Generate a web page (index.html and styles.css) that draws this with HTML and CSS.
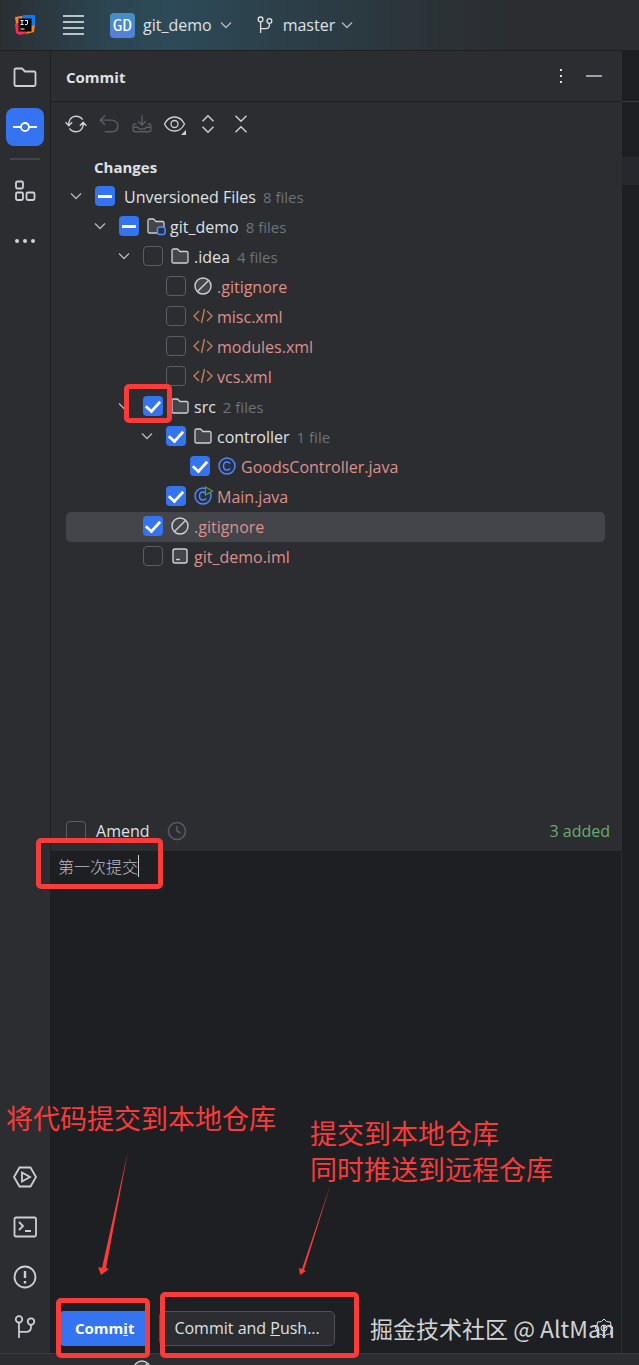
FILE: index.html
```html
<!DOCTYPE html>
<html lang="en">
<head>
  <meta charset="UTF-8">
  <meta name="viewport" content="width=device-width, initial-scale=1.0">
  <title>git_demo - Commit</title>
  <link rel="stylesheet" href="styles.css">
</head>
<body>

  <!-- Shared icons -->
  <svg class="sprite" aria-hidden="true">
    <symbol id="chevron" viewBox="0 0 12 12"><path d="M1 3.500l5 5 5-5" fill="none" stroke="currentColor" stroke-width="1.3"/></symbol>
    <symbol id="folder" viewBox="0 0 18 16"><path d="M1 2.500Q1 1 2.500 1H6.500L9 3.500H15.500Q17 3.500 17 5V13.500Q17 15 15.500 15H2.500Q1 15 1 13.500Z" fill="#43454a" stroke="#ced0d6" stroke-width="1.3"/></symbol>
    <symbol id="ignored" viewBox="0 0 18 18"><circle cx="9" cy="9" r="8" fill="#43454a" stroke="#ced0d6" stroke-width="1.4"/><path d="M3.500 14.500l11-11" stroke="#ced0d6" stroke-width="1.4"/></symbol>
    <symbol id="xml" viewBox="0 0 20 16"><path d="M6 3L1 8l5 5M14 3l5 5-5 5M11.500 1L8.500 15" fill="none" stroke="#c77d55" stroke-width="1.4"/></symbol>
    <symbol id="branch" viewBox="0 0 20 22"><g fill="none" stroke="currentColor" stroke-width="1.6"><circle cx="4.500" cy="4" r="3"/><circle cx="15.500" cy="6" r="3"/><path d="M4.500 7V21M4.500 15.500H11Q15.500 15.500 15.500 11V9"/></g></symbol>
  </svg>

  <!-- Top bar -->
  <header class="topbar">
    <svg class="logo" viewBox="0 0 20 20">
      <path d="M0 2L7 1 12 6 6 19 2 17Z" fill="#fc801d"/>
      <path d="M0 9L6 7 12 18 5 20 1 18Z" fill="#fe2857"/>
      <path d="M8 0H20V10L15 15 6 6Z" fill="#087cfa"/>
      <path d="M20 10L19 17 11 19 14 12Z" fill="#fc801d"/>
      <rect x="3.500" y="3.500" width="13" height="13" fill="#000"/>
      <path d="M5.500 5.500h3M7 5.500v4M5.500 9.500h3M10 5.500h2.500v3q0 1-1 1H10M5.500 14h4" stroke="#fff" fill="none"/>
    </svg>
    <button class="menu-button" aria-label="Main menu"><i></i><i></i><i></i><i></i></button>
    <button class="project"><span class="badge">GD</span>git_demo<svg class="chevron"><use href="#chevron"/></svg></button>
    <button class="vcs"><svg class="branch"><use href="#branch"/></svg>master<svg class="chevron"><use href="#chevron"/></svg></button>
  </header>

  <div class="workspace">

    <!-- Tool window bar -->
    <nav class="rail">
      <button aria-label="Project"><svg viewBox="0 0 24 24"><path d="M1.500 5Q1.500 3.500 3 3.500H9L12 6.500H21Q22.500 6.500 22.500 8V19.500Q22.500 21 21 21H3Q1.500 21 1.500 19.500Z"/></svg></button>
      <button class="active" aria-label="Commit"><svg viewBox="0 0 24 24"><circle cx="12" cy="12" r="4"/><path d="M0 12h8M16 12h8"/></svg></button>
      <hr>
      <button aria-label="Structure"><svg viewBox="0 0 24 24"><rect x="3" y="2.500" width="7" height="7" rx="1.500"/><rect x="3" y="13.500" width="7" height="7.500" rx="1.500"/><rect x="13.500" y="13.500" width="8" height="7.500" rx="1.500"/></svg></button>
      <button aria-label="More"><svg viewBox="0 0 24 24"><g class="solid"><circle cx="4" cy="12" r="2"/><circle cx="12" cy="12" r="2"/><circle cx="20" cy="12" r="2"/></g></svg></button>
      <span class="spacer"></span>
      <button aria-label="Services"><svg viewBox="0 0 24 24"><path d="M6.500 2.500h11L23 12l-5.500 9.500h-11L1 12ZM9 7.500v9l8-4.500Z"/></svg></button>
      <button aria-label="Terminal"><svg viewBox="0 0 24 24"><rect x="1.500" y="2.500" width="21.500" height="19" rx="1.500"/><path d="M6 7l4 4-4 4M12 16h6"/></svg></button>
      <button aria-label="Problems"><svg viewBox="0 0 24 24"><circle cx="12" cy="12" r="10.500"/><path class="thick" d="M12 6v7M12 16v2.500"/></svg></button>
      <button aria-label="Git"><svg viewBox="0 0 20 22"><use href="#branch"/></svg></button>
    </nav>

    <!-- Commit tool window -->
    <main class="commit">
      <div class="title">
        <h1>Commit</h1>
        <button aria-label="Options"><svg viewBox="0 0 16 16"><g class="solid"><rect x="7" y="1" width="2" height="2"/><rect x="7" y="7" width="2" height="2"/><rect x="7" y="13" width="2" height="2"/></g></svg></button>
        <button class="hide" aria-label="Hide"><svg viewBox="0 0 16 16"><path d="M0 8h16"/></svg></button>
      </div>

      <div class="toolbar">
        <button aria-label="Refresh"><svg viewBox="0 0 20 20"><path d="M3.500 11V8.500Q5 3 10 3q4 0 6 3M16.500 9v2.500Q15 17 10 17q-4 0-6-3M.5 8.500l3 3 3-3M13.500 11.500l3-3 3 3"/></svg></button>
        <button class="off" aria-label="Rollback"><svg viewBox="0 0 20 20"><path d="M6.500 2L2 6.500 6.500 11M2 6.500H12.500Q18 7 18 12t-5.500 5H6"/></svg></button>
        <button class="off" aria-label="Shelve"><svg viewBox="0 0 20 20"><path d="M10 2v9M6.500 7.500L10 11l3.500-3.500M5 10H3.500Q2 10 2 11.500V15.500Q2 17 3.500 17h13q1.500 0 1.500-1.500V11.500Q18 10 16.500 10H15M2 13H6l1.500 1.500h5L14 13h4"/></svg></button>
        <button aria-label="View options"><svg viewBox="1 1 22 22"><path d="M1.500 12Q5 5 11.500 5T21.500 12Q18 19 11.500 19T1.500 12Z"/><circle cx="11.500" cy="12" r="3.500"/><path class="solid" d="M23 18v5h-5Z"/></svg></button>
        <button aria-label="Expand all"><svg viewBox="0 0 20 20"><path d="M5 7.500l5-5 5 5M5 12.500l5 5 5-5"/></svg></button>
        <button aria-label="Collapse all"><svg viewBox="0 0 20 20"><path d="M5 2.500l5 5 5-5M5 17.500l5-5 5 5"/></svg></button>
      </div>

      <h2>Changes</h2>
      <ul class="tree">
        <li class="lvl0"><svg class="chevron"><use href="#chevron"/></svg><input type="checkbox" class="mixed" id="f0"><label for="f0">Unversioned Files</label><small>8 files</small></li>
        <li class="lvl1"><svg class="chevron"><use href="#chevron"/></svg><input type="checkbox" class="mixed" id="f1"><svg class="icon folder" viewBox="0 0 18 16"><use href="#folder" width="18" height="16"/><rect x="10.500" y="9" width="7.500" height="7.500" rx="2" fill="#25324d" stroke="#548af7" stroke-width="1.500"/></svg><label for="f1">git_demo</label><small>8 files</small></li>
        <li class="lvl2"><svg class="chevron"><use href="#chevron"/></svg><input type="checkbox" id="f2"><svg class="icon folder"><use href="#folder"/></svg><label for="f2">.idea</label><small>4 files</small></li>
        <li class="lvl3 leaf"><input type="checkbox" id="f3"><svg class="icon"><use href="#ignored"/></svg><label for="f3">.gitignore</label></li>
        <li class="lvl3 leaf"><input type="checkbox" id="f4"><svg class="icon"><use href="#xml"/></svg><label for="f4">misc.xml</label></li>
        <li class="lvl3 leaf"><input type="checkbox" id="f5"><svg class="icon"><use href="#xml"/></svg><label for="f5">modules.xml</label></li>
        <li class="lvl3 leaf"><input type="checkbox" id="f6"><svg class="icon"><use href="#xml"/></svg><label for="f6">vcs.xml</label></li>
        <li class="lvl2"><svg class="chevron"><use href="#chevron"/></svg><input type="checkbox" id="f7" checked><svg class="icon folder"><use href="#folder"/></svg><label for="f7">src</label><small>2 files</small></li>
        <li class="lvl3"><svg class="chevron"><use href="#chevron"/></svg><input type="checkbox" id="f8" checked><svg class="icon folder"><use href="#folder"/></svg><label for="f8">controller</label><small>1 file</small></li>
        <li class="lvl4 leaf"><input type="checkbox" id="f9" checked><svg class="icon" viewBox="0 0 18 18"><circle cx="9" cy="9" r="8" fill="#25324d" stroke="#548af7" stroke-width="1.400"/><path d="M12 6.500Q11 5 9 5 5.500 5 5.500 9T9 13q2 0 3-1.500" fill="none" stroke="#548af7" stroke-width="1.400"/></svg><label for="f9">GoodsController.java</label></li>
        <li class="lvl3 leaf"><input type="checkbox" id="f10" checked><svg class="icon" viewBox="0 0 18 18"><circle cx="9" cy="9" r="8" fill="#25324d" stroke="#548af7" stroke-width="1.400"/><path d="M12 7.500Q11 5 9 5 5.500 5 5.500 9T9 13q2 0 3-1.500" fill="none" stroke="#548af7" stroke-width="1.400"/><path d="M11.500 0v8L18.500 4Z" fill="#253627" stroke="#57965c" stroke-width="1.200"/></svg><label for="f10">Main.java</label></li>
        <li class="lvl2 leaf selected"><input type="checkbox" id="f11" checked><svg class="icon"><use href="#ignored"/></svg><label for="f11">.gitignore</label></li>
        <li class="lvl2 leaf"><input type="checkbox" id="f12"><svg class="icon" viewBox="0 0 18 18"><rect x="2" y="2" width="14" height="14" rx="2" fill="#43454a" stroke="#ced0d6" stroke-width="1.400"/><path d="M5 12.500h4" stroke="#ced0d6" stroke-width="1.400"/></svg><label for="f12">git_demo.iml</label></li>
      </ul>

      <div class="amend">
        <input type="checkbox" id="amend">
        <label for="amend">A<u>m</u>end</label>
        <button aria-label="Commit history"><svg viewBox="0 0 20 20"><circle cx="10" cy="10" r="8.500"/><path d="M10 5v5l3.500 2"/></svg></button>
        <span class="added">3 added</span>
      </div>

      <div class="message">
        <textarea aria-label="Commit message">第一次提交</textarea>
        <span class="caret"></span>
      </div>

      <div class="actions">
        <button class="primary"><span>Comm<u>i</u>t</span></button>
        <button class="secondary"><span>Commit and <u>P</u>ush...</span></button>
        <button class="settings" aria-label="Commit options"><svg viewBox="0 0 20 20"><path d="M10 1l2.500 2.500 4 .5.500 4L19 10l-2 2-.5 4-4 .5L10 19l-2.500-2.500-4-.5-.5-4L1 10l2-2 .5-4 4-.5Z"/><circle cx="10" cy="10" r="3"/></svg></button>
      </div>
    </main>

    <aside class="editor"><div class="tabs"></div><div class="line"></div></aside>
  </div>

  <footer class="status"><span>git_demo</span><svg viewBox="0 0 18 18"><use href="#ignored"/></svg><span>.gitignore</span></footer>

  <!-- Annotations over the window -->
  <div class="mark mark-src"></div>
  <div class="mark mark-message"></div>
  <div class="mark mark-commit"></div>
  <div class="mark mark-push"></div>
  <p class="note note-commit">将代码提交到本地仓库</p>
  <p class="note note-push">提交到本地仓库<br>同时推送到远程仓库</p>
  <svg class="arrow arrow-commit" viewBox="0 0 32 126"><path d="M30 1L8 118l3 1-8 6-3-8 4 1Z"/></svg>
  <svg class="arrow arrow-push" viewBox="0 0 34 94"><path d="M32 1L5 88l2 1-6 4-1-7 3 1Z"/></svg>
  <p class="watermark">掘金技术社区 @ AltMan</p>

</body>
</html>
```

FILE: styles.css
```css
* {
  box-sizing: border-box;
}

body {
  margin: 0;
  height: 100vh;
  display: flex;
  flex-direction: column;
  position: relative;
  overflow: hidden;
  background: #2b2d30;
  color: #dfe1e5;
  font: 16px/20px "Open Sans", "Noto Sans CJK SC", sans-serif;
}

button {
  display: flex;
  align-items: center;
  justify-content: center;
  padding: 0;
  border: none;
  background: none;
  color: inherit;
  font: inherit;
}

button svg {
  fill: none;
  stroke: currentColor;
}

.solid {
  fill: currentColor;
  stroke: none;
}

.sprite {
  position: absolute;
  width: 0;
  height: 0;
}

.chevron {
  width: 12px;
  height: 12px;
  flex: none;
  color: #b4b8bf;
}

/* Top bar */
.topbar {
  flex: none;
  display: flex;
  align-items: center;
  height: 51px;
  padding-left: 15px;
  border-bottom: 1px solid #1e1f22;
  background: linear-gradient(90deg, #2b2f33 0, #2c4652 110px, #2d4a58 170px, #2c3f49 290px, #2b3236 440px, #2b2d30 520px);
}

.logo {
  width: 20px;
  height: 20px;
}

.menu-button {
  flex-direction: column;
  gap: 4px;
  margin-left: 28px;
}

.menu-button i {
  width: 21px;
  height: 2px;
  background: #b8c4ca;
}

.project {
  gap: 8px;
  margin-left: 26px;
}

.badge {
  width: 25px;
  height: 25px;
  border-radius: 4px;
  background: linear-gradient(200deg, #3d94bd, #5b7be0);
  color: #fff;
  font: 16px/25px "DejaVu Sans Mono", monospace;
}

.vcs {
  gap: 6px;
  margin-left: 25px;
}

.branch {
  width: 16px;
  height: 18px;
  margin-right: 4px;
}

/* Tool window bar */
.workspace {
  flex: 1;
  display: flex;
  min-height: 0;
}

.rail {
  flex: none;
  width: 51px;
  display: flex;
  flex-direction: column;
  align-items: center;
  gap: 12px;
  padding: 7px 0;
  border-right: 1px solid #1e1f22;
  color: #ced0d6;
}

.rail button {
  flex: none;
  width: 38px;
  height: 38px;
  border-radius: 8px;
}

.rail .active {
  background: #3574f0;
  color: #fff;
}

.rail svg {
  width: 24px;
  height: 24px;
  stroke-width: 1.8;
}

.rail .thick {
  stroke-width: 2.4;
}

.rail hr {
  width: 30px;
  height: 2px;
  margin: 0;
  border: none;
  background: #43454a;
}

.spacer {
  flex: 1;
}

/* Commit tool window */
.commit {
  flex: 1;
  min-width: 0;
  display: flex;
  flex-direction: column;
}

.title {
  flex: none;
  display: flex;
  align-items: center;
  gap: 17px;
  height: 51px;
  padding: 0 19px 0 15px;
  border-bottom: 1px solid #1e1f22;
}

.title h1 {
  flex: 1;
  margin: 0;
  font-size: 15px;
  line-height: 22px;
  padding-top: 2px;
}

.title svg {
  width: 16px;
  height: 16px;
  stroke-width: 2;
}

.title .hide {
  color: #9da0a8;
}

.toolbar {
  display: flex;
  gap: 11px;
  padding: 11px 14px;
  color: #ced0d6;
}

.toolbar svg {
  width: 22px;
  height: 22px;
  stroke-width: 1.3;
}

.toolbar .off {
  color: #5a5d63;
}

h2 {
  margin: 7px 0 0;
  padding-left: 43px;
  font-size: 15px;
  line-height: 28px;
}

.tree {
  flex: 1;
  margin: 1px 16px 0 15px;
  padding: 0;
  list-style: none;
}

.tree li {
  display: flex;
  align-items: center;
  height: 30px;
  border-radius: 5px;
}

.tree .chevron {
  margin: 0 13px 2px 4px;
}

.tree .lvl1 { padding-left: 24px; }
.tree .lvl2 { padding-left: 48px; }
.tree .lvl3 { padding-left: 71px; }
.tree .lvl4 { padding-left: 95px; }
.tree .selected { background: #43454a; }

.tree .icon {
  flex: none;
  width: 20px;
  height: 18px;
  margin: 0 4px 2px 7px;
  overflow: visible;
}

.tree .folder {
  height: 16px;
}

.tree .lvl0 label {
  margin-left: 9px;
}

.tree .leaf label {
  color: #dd908c;
}

.tree small {
  margin-left: 7px;
  color: #6f737a;
  font-size: 15px;
}

input[type="checkbox"] {
  appearance: none;
  flex: none;
  width: 20px;
  height: 20px;
  margin: 0;
  border: 1px solid #5a5d63;
  border-radius: 4px;
}

.tree input[type="checkbox"] {
  margin-bottom: 2px;
}

.tree .leaf input[type="checkbox"] {
  margin-left: 29px;
}

input[type="checkbox"]:checked,
input[type="checkbox"].mixed {
  display: grid;
  place-items: center;
  border: none;
  background: #3574f0;
}

input.mixed::before {
  content: "";
  width: 14px;
  height: 3px;
  background: #fff;
}

input:checked::before {
  content: "";
  width: 13px;
  height: 7px;
  margin-bottom: 3px;
  border: solid #fff;
  border-width: 0 0 3px 3px;
  transform: rotate(-48deg) scale(0.9);
}

.amend {
  display: flex;
  align-items: center;
  height: 40px;
  padding: 0 11px 1px 15px;
}

.amend label {
  margin: 0 17px 0 10px;
}

.amend button {
  color: #5a5d63;
}

.amend svg {
  width: 20px;
  height: 20px;
  stroke-width: 1.5;
}

.added {
  margin-left: auto;
  color: #6aab73;
}

.message {
  display: flex;
  position: relative;
  height: 444px;
  background: #1e1f22;
}

.message textarea {
  flex: 1;
  padding: 5px 7px;
  border: none;
  outline: none;
  resize: none;
  background: none;
  color: #bcbec4;
  font: 300 16px/20px "Noto Sans CJK SC", sans-serif;
}

.caret {
  position: absolute;
  left: 87px;
  top: 4px;
  width: 1px;
  height: 22px;
  background: #ced0d6;
}

.actions {
  display: flex;
  align-items: center;
  gap: 9px;
  height: 58px;
  padding: 8px 7px 0 8px;
  background: #1e1f22;
}

.actions button {
  height: 35px;
  border-radius: 5px;
}

.actions .primary {
  padding: 0 16px;
  background: #3574f0;
  color: #fff;
  font-weight: 700;
  font-size: 15px;
}

.actions .secondary {
  padding: 0 14px;
  border: 1px solid #4e5157;
  background: #2b2d30;
}

.actions .settings {
  margin-left: auto;
}

.actions svg {
  width: 20px;
  height: 20px;
}

/* Editor edge */
.editor {
  flex: none;
  width: 18px;
  border-left: 1px solid #2b2d30;
  background: #1e1f22;
}

.tabs {
  height: 51px;
  border-bottom: 1px solid #393b40;
}

.line {
  height: 28px;
  margin-top: 55px;
  background: #26282e;
}

.status {
  flex: none;
  display: flex;
  gap: 32px;
  height: 12px;
  padding: 6px 0 0 37px;
  overflow: hidden;
  border-top: 1px solid #393b40;
  font-size: 15px;
}

.status svg {
  flex: none;
  width: 18px;
  height: 18px;
  margin-right: -20px;
}

/* Annotations */
.mark,
.note,
.arrow,
.watermark {
  position: absolute;
  margin: 0;
  pointer-events: none;
}

.mark {
  border: 5px solid #f93b3a;
  border-radius: 5px;
}

.mark-src {
  left: 124px;
  top: 384px;
  width: 48px;
  height: 39px;
}

.mark-message {
  left: 36px;
  top: 838px;
  width: 127px;
  height: 51px;
}

.mark-commit {
  left: 56px;
  top: 1298px;
  width: 94px;
  height: 60px;
}

.mark-push {
  left: 160px;
  top: 1292px;
  width: 199px;
  height: 66px;
}

.note {
  color: #f93b3a;
  font: 27px/36px "Noto Sans CJK SC", sans-serif;
}

.note-commit {
  left: 6px;
  top: 1100px;
}

.note-push {
  left: 310px;
  top: 1115px;
}

.arrow {
  fill: #f93b3a;
}

.arrow-commit {
  left: 98px;
  top: 1150px;
  width: 32px;
  height: 126px;
}

.arrow-push {
  left: 299px;
  top: 1182px;
  width: 34px;
  height: 94px;
}

.watermark {
  left: 370px;
  top: 1311px;
  color: #d2d3d4;
  font: 23px/34px "Noto Sans CJK SC", sans-serif;
  white-space: nowrap;
}
```
